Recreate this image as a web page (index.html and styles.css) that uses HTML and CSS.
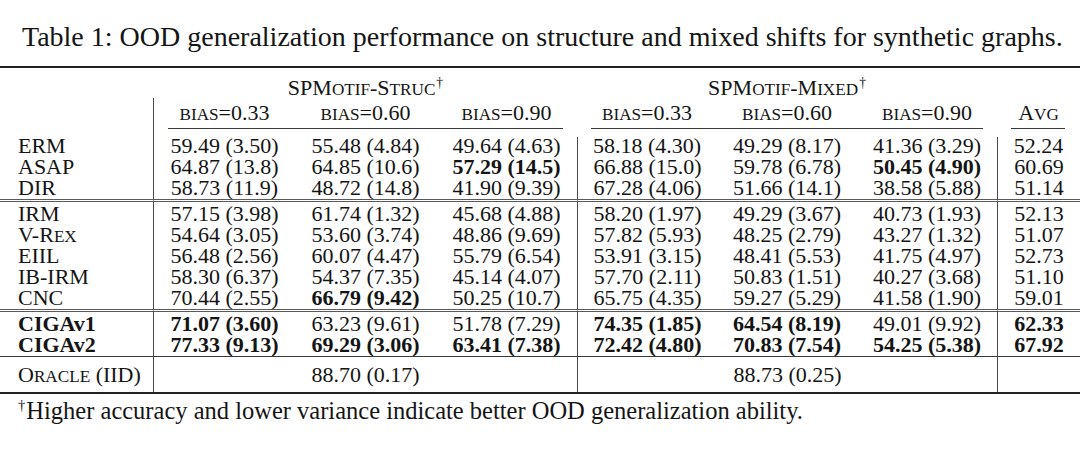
FILE: index.html
```html
<!DOCTYPE html>
<html lang="en">
<head>
<meta charset="utf-8">
<title>Table 1</title>
<link rel="stylesheet" href="styles.css">
</head>
<body>
<div class="page">
  <p class="caption">Table 1: OOD generalization performance on structure and mixed shifts for synthetic graphs.</p>
  <table class="results">
    <colgroup>
      <col class="c-method">
      <col class="c-a"><col class="c-a"><col class="c-a">
      <col class="c-b"><col class="c-b"><col class="c-b">
      <col class="c-avg">
    </colgroup>
    <thead>
      <tr class="group-row">
        <th></th>
        <th colspan="3">SPM<span class="sc">otif</span>-S<span class="sc">truc</span><sup>†</sup></th>
        <th colspan="3">SPM<span class="sc">otif</span>-M<span class="sc">ixed</span><sup>†</sup></th>
        <th></th>
      </tr>
      <tr class="bias-row">
        <th class="method"></th>
        <th><span class="sc">bias</span>=0.33</th>
        <th><span class="sc">bias</span>=0.60</th>
        <th><span class="sc">bias</span>=0.90</th>
        <th><span class="sc">bias</span>=0.33</th>
        <th><span class="sc">bias</span>=0.60</th>
        <th><span class="sc">bias</span>=0.90</th>
        <th>A<span class="sc">vg</span></th>
      </tr>
      <tr class="cmid-row">
        <th class="method"></th>
        <th colspan="3"><div class="cmid"></div></th>
        <th colspan="3"><div class="cmid"></div></th>
        <th><div class="cmid"></div></th>
      </tr>
    </thead>
    <tbody class="sec sec-first">
      <tr><td class="method">ERM</td><td>59.49 (3.50)</td><td>55.48 (4.84)</td><td>49.64 (4.63)</td><td class="vl">58.18 (4.30)</td><td>49.29 (8.17)</td><td>41.36 (3.29)</td><td class="vl">52.24</td></tr>
      <tr><td class="method">ASAP</td><td>64.87 (13.8)</td><td>64.85 (10.6)</td><td class="b">57.29 (14.5)</td><td class="vl">66.88 (15.0)</td><td>59.78 (6.78)</td><td class="b">50.45 (4.90)</td><td class="vl">60.69</td></tr>
      <tr><td class="method">DIR</td><td>58.73 (11.9)</td><td>48.72 (14.8)</td><td>41.90 (9.39)</td><td class="vl">67.28 (4.06)</td><td>51.66 (14.1)</td><td>38.58 (5.88)</td><td class="vl">51.14</td></tr>
    </tbody>
    <tbody class="sec sec-double">
      <tr><td class="method">IRM</td><td>57.15 (3.98)</td><td>61.74 (1.32)</td><td>45.68 (4.88)</td><td class="vl">58.20 (1.97)</td><td>49.29 (3.67)</td><td>40.73 (1.93)</td><td class="vl">52.13</td></tr>
      <tr><td class="method">V-R<span class="sc">ex</span></td><td>54.64 (3.05)</td><td>53.60 (3.74)</td><td>48.86 (9.69)</td><td class="vl">57.82 (5.93)</td><td>48.25 (2.79)</td><td>43.27 (1.32)</td><td class="vl">51.07</td></tr>
      <tr><td class="method">EIIL</td><td>56.48 (2.56)</td><td>60.07 (4.47)</td><td>55.79 (6.54)</td><td class="vl">53.91 (3.15)</td><td>48.41 (5.53)</td><td>41.75 (4.97)</td><td class="vl">52.73</td></tr>
      <tr><td class="method">IB-IRM</td><td>58.30 (6.37)</td><td>54.37 (7.35)</td><td>45.14 (4.07)</td><td class="vl">57.70 (2.11)</td><td>50.83 (1.51)</td><td>40.27 (3.68)</td><td class="vl">51.10</td></tr>
      <tr><td class="method">CNC</td><td>70.44 (2.55)</td><td class="b">66.79 (9.42)</td><td>50.25 (10.7)</td><td class="vl">65.75 (4.35)</td><td>59.27 (5.29)</td><td>41.58 (1.90)</td><td class="vl">59.01</td></tr>
    </tbody>
    <tbody class="sec sec-double">
      <tr><td class="method b">CIGAv1</td><td class="b">71.07 (3.60)</td><td>63.23 (9.61)</td><td>51.78 (7.29)</td><td class="vl b">74.35 (1.85)</td><td class="b">64.54 (8.19)</td><td>49.01 (9.92)</td><td class="vl b">62.33</td></tr>
      <tr><td class="method b">CIGAv2</td><td class="b">77.33 (9.13)</td><td class="b">69.29 (3.06)</td><td class="b">63.41 (7.38)</td><td class="vl b">72.42 (4.80)</td><td class="b">70.83 (7.54)</td><td class="b">54.25 (5.38)</td><td class="vl b">67.92</td></tr>
    </tbody>
    <tbody class="sec sec-single">
      <tr class="oracle"><td class="method">O<span class="sc">racle</span> (IID)</td><td colspan="3">88.70 (0.17)</td><td colspan="3" class="vl">88.73 (0.25)</td><td class="vl"></td></tr>
    </tbody>
  </table>
  <p class="footnote"><sup>†</sup>Higher accuracy and lower variance indicate better OOD generalization ability.</p>
</div>
</body>
</html>
```

FILE: styles.css
```css
html, body {
  margin: 0;
  padding: 0;
  background: #ffffff;
}

.page {
  width: 1080px;
  height: 455px;
  overflow: hidden;
  font-family: "Liberation Serif", "Times New Roman", serif;
  color: #141414;
}

.caption {
  margin: 21px 0 0 22px;
  font-size: 28px;
  line-height: 32px;
  white-space: nowrap;
}

.results {
  margin-top: 13px;
  width: 1080px;
  table-layout: fixed;
  border-collapse: separate;
  border-spacing: 0;
  border-top: 2px solid #222;
  border-bottom: 2px solid #222;
  font-size: 22px;
  line-height: 21px;
}

.c-method { width: 154px; }
.c-a { width: 141px; }
.c-b { width: 140px; }
.c-avg { width: 83px; }

.results th,
.results td {
  padding: 0;
  text-align: center;
  font-weight: normal;
  white-space: nowrap;
  height: 21px;
}

.results .method {
  text-align: left;
  padding-left: 18px;
  border-right: 1px solid #4a4a4a;
}

.results .b {
  font-weight: bold;
}

.sc {
  text-transform: uppercase;
  font-size: 0.78em;
  line-height: 0;
}

sup {
  font-size: 0.62em;
  line-height: 0;
  vertical-align: 0.6em;
  margin-left: 1px;
}

.group-row th {
  padding-top: 9px;
}

.bias-row th {
  padding-top: 4px;
  padding-bottom: 5px;
}

.cmid-row th {
  height: 1px;
  padding: 0;
}

.cmid {
  margin: 0 14px;
  border-top: 1px solid #3a3a3a;
}

.cmid-row th:last-child .cmid {
  margin-right: 15px;
}

.results td.vl {
  border-left: 1px solid #4a4a4a;
}

.sec-first tr:first-child td {
  padding-top: 6px;
}

.sec-first tr:first-child td.vl {
  border-left: 0;
  background: linear-gradient(#4a4a4a, #4a4a4a) no-repeat 0 8px / 1px calc(100% - 8px);
}

.sec tr:last-child td {
  padding-bottom: 1px;
}

.sec-double tr:first-child td {
  border-top: 3px double #5a5a5a;
  padding-top: 1px;
}

.sec-single tr:first-child td {
  border-top: 1px solid #3a3a3a;
}

.results tr.oracle td {
  padding-top: 7px;
  padding-bottom: 7px;
}

.footnote {
  margin: 5px 0 0 18px;
  font-size: 24.5px;
  line-height: 24px;
  white-space: nowrap;
}

.footnote sup {
  font-size: 0.6em;
  margin-left: 0;
  margin-right: 1px;
}
```
